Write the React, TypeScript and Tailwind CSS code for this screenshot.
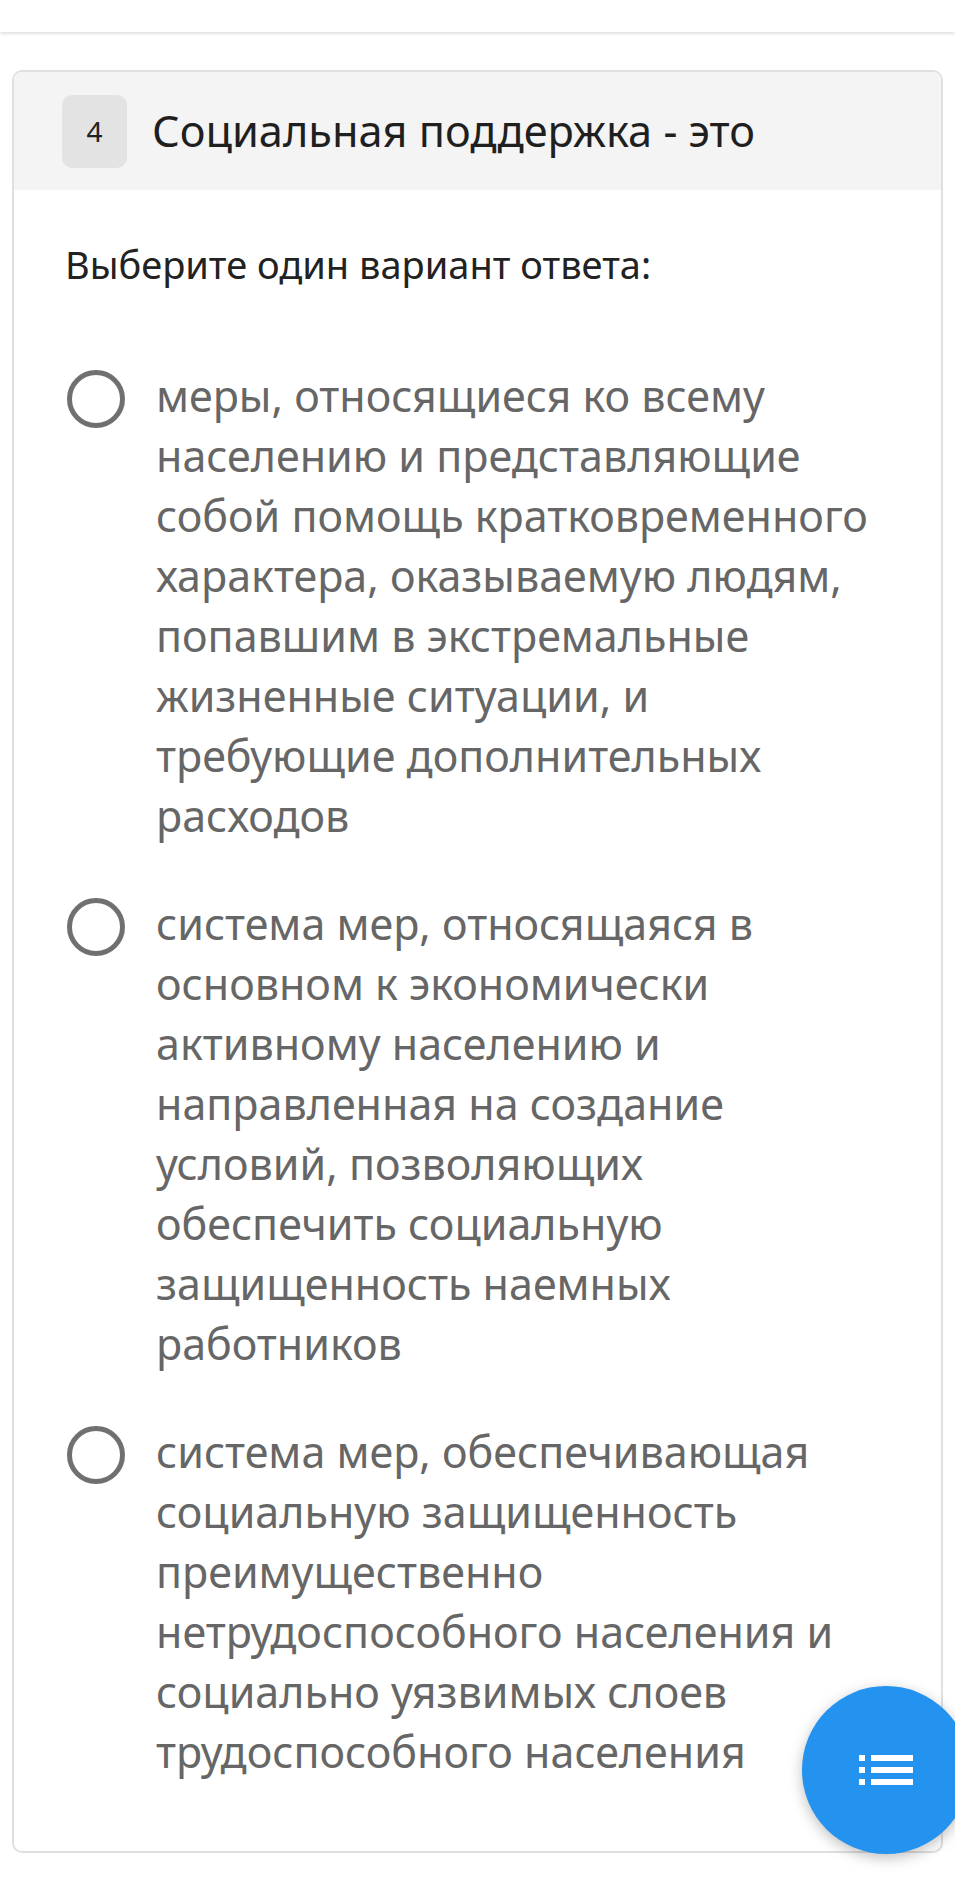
const options: string[][] = [
  [
    "меры, относящиеся ко всему",
    "населению и представляющие",
    "собой помощь кратковременного",
    "характера, оказываемую людям,",
    "попавшим в экстремальные",
    "жизненные ситуации, и",
    "требующие дополнительных",
    "расходов",
  ],
  [
    "система мер, относящаяся в",
    "основном к экономически",
    "активному населению и",
    "направленная на создание",
    "условий, позволяющих",
    "обеспечить социальную",
    "защищенность наемных",
    "работников",
  ],
  [
    "система мер, обеспечивающая",
    "социальную защищенность",
    "преимущественно",
    "нетрудоспособного населения и",
    "социально уязвимых слоев",
    "трудоспособного населения",
  ],
];

function ListIcon() {
  return (
    <svg width="54" height="30" viewBox="0 0 54 30" fill="#ffffff">
      <rect x="0" y="0" width="6" height="6" />
      <rect x="12" y="0" width="42" height="6" />
      <rect x="0" y="12" width="6" height="6" />
      <rect x="12" y="12" width="42" height="6" />
      <rect x="0" y="24" width="6" height="6" />
      <rect x="12" y="24" width="42" height="6" />
    </svg>
  );
}

export default function App() {
  return (
    <div
      className="relative min-h-[1883px] w-[955px] overflow-hidden bg-white"
      style={{ fontFamily: '"Noto Sans", "Open Sans", sans-serif' }}
    >
      <div className="h-[32px] bg-white shadow-[0_2px_3px_rgba(0,0,0,0.12)]" />

      <div className="mx-[12px] mt-[38px] overflow-hidden rounded-[10px] border-2 border-[#e0e0e0]">
        <div className="flex h-[118px] items-center gap-[25px] bg-[#f4f4f4] pl-[48px]">
          <div className="flex h-[73px] w-[65px] items-center justify-center rounded-[10px] bg-[#e3e3e3] text-[28px] text-[#222]">
            4
          </div>
          <h2 className="text-[43.3px] leading-none text-[#1f1f1f]">
            Социальная поддержка - это
          </h2>
        </div>

        <div className="pb-[69px] pl-[51px] pr-[20px] pt-[50px]">
          <p className="text-[38px] leading-[48px] text-[#222]">
            Выберите один вариант ответа:
          </p>

          <div className="mt-[78px] flex flex-col gap-[48px]">
            {options.map((lines, i) => (
              <label key={i} className="flex items-start gap-[31px]">
                <span className="mt-[4px] ml-[2px] box-border size-[58px] shrink-0 rounded-full border-[5px] border-[#707070]" />
                <span className="text-[43px] leading-[60px] text-[#666]">
                  {lines.map((l, j) => (
                    <span key={j} className="block whitespace-nowrap">
                      {l}
                    </span>
                  ))}
                </span>
              </label>
            ))}
          </div>
        </div>
      </div>

      <button
        type="button"
        className="absolute left-[802px] top-[1686px] flex size-[168px] items-center justify-center rounded-full bg-[#2492ef] shadow-[0_4px_14px_rgba(0,0,0,0.25)]"
      >
        <ListIcon />
      </button>
    </div>
  );
}
